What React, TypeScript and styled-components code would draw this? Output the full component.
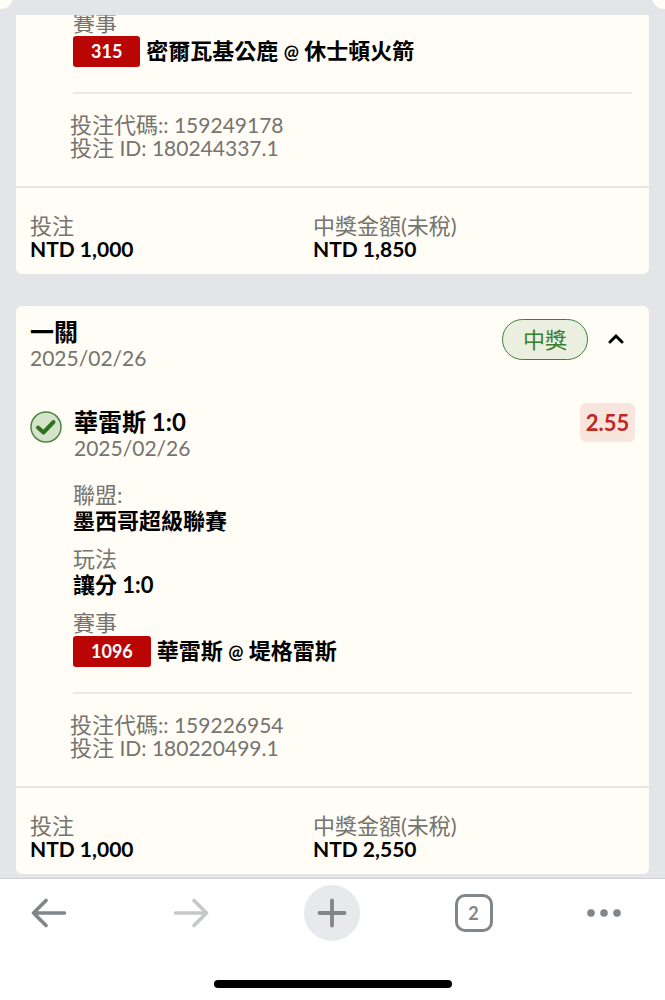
import React from "react";
import styled, { createGlobalStyle } from "styled-components";

const Global = createGlobalStyle`
  *, *::before, *::after { box-sizing: border-box; }
  html, body { margin: 0; background: #e4e5e8; }
  body, button {
    font-family: "Lato", "Noto Sans CJK TC", sans-serif;
    font-size: 22px;
    color: #000;
  }
  h2, h3, p, dl, dd, dt { margin: 0; font: inherit; }
`;

const Screen = styled.div`
  display: flex;
  flex-direction: column;
  height: 100vh;
  background: #e4e5e8;
`;

const SheetTop = styled.header`
  position: relative;
  flex: none;
  height: 15px;
  overflow: hidden;
`;

const Corner = styled.span<{ $side: "left" | "right" }>`
  position: absolute;
  top: -16px;
  ${(p) => p.$side}: -13px;
  width: 26px;
  height: 25px;
  border-radius: 12px;
  background: #fffdf5;
`;

const BetList = styled.main`
  flex: 1;
  min-height: 0;
  overflow: hidden;
  padding: 0 16px;
  display: flex;
  flex-direction: column;
  gap: 32px;
`;

const Card = styled.article<{ $scrolled?: boolean }>`
  flex: none;
  overflow: hidden;
  background: #fffdf5;
  border-radius: ${(p) => (p.$scrolled ? "0 0 6px 6px" : "6px")};
`;

const CardHead = styled.header`
  display: flex;
  align-items: flex-start;
  padding: 13px 14px 0;
`;

const Titles = styled.div`
  flex: 1;
`;

const Title = styled.h2`
  font-size: 24px;
  line-height: 26px;
  font-weight: 700;
`;

const DateText = styled.p`
  font-size: 21px;
  line-height: 26px;
  color: #757470;
`;

const Pill = styled.span`
  width: 86px;
  height: 41px;
  border: 1px solid #3f7f38;
  border-radius: 21px;
  background: #ebefe0;
  color: #3a7d2c;
  line-height: 40px;
  text-align: center;
`;

const Toggle = styled.button`
  display: flex;
  align-items: center;
  justify-content: center;
  width: 30px;
  height: 40px;
  margin-left: 13px;
  margin-right: 4px;
  padding: 0;
  border: 0;
  background: none;
`;

const Selection = styled.section`
  display: flex;
  align-items: flex-start;
  padding: 32px 14px 0;

  ${Titles} {
    padding-top: 6px;
  }
`;

const CheckIcon = styled.svg`
  flex: none;
  margin-top: 8px;
  margin-right: 12px;
`;

const Odds = styled.span`
  width: 55px;
  height: 39px;
  border-radius: 6px;
  background: #f8e5de;
  color: #c2261f;
  font-weight: 700;
  line-height: 39px;
  text-align: center;
`;

const Details = styled.dl<{ $scrolled?: boolean }>`
  display: flex;
  flex-direction: column;
  gap: 12px;
  margin: 0 17px 0 57px;
  padding: ${(p) => (p.$scrolled ? "0" : "21px")} 0 25px;
  ${(p) => p.$scrolled && "margin-top: -5px;"}
  border-bottom: 2px solid #ebe9e3;
`;

const Term = styled.dt`
  line-height: 26px;
  color: #757470;
`;

const Value = styled.dd`
  display: flex;
  align-items: center;
  gap: 6px;
  line-height: 26px;
  font-weight: 700;
`;

const GameCode = styled.span`
  padding: 0 18px;
  border-radius: 3px;
  background: #b90504;
  color: #fff;
  font-size: 18px;
  line-height: 31px;
`;

const At = styled.span`
  font-size: 18px;
`;

const Codes = styled.div`
  padding: 19px 14px 27px 54px;
  line-height: 23px;
  color: #757470;
`;

const Latin = styled.span`
  font-size: 21px;
`;

const Amounts = styled.dl`
  display: grid;
  grid-template-columns: 283px 1fr;
  padding: 26px 14px 14px;
  border-top: 2px solid #e6e6e2;
  line-height: 23px;
`;

const AmountLabel = styled.dt`
  color: #757470;
`;

const Amount = styled.dd`
  font-size: 21px;
  font-weight: 700;
`;

const BrowserBar = styled.footer`
  flex: none;
  height: 122px;
  border-top: 1px solid #cfd0d3;
  background: #fff;
  display: flex;
  flex-direction: column;
  justify-content: space-between;
  align-items: center;
  padding-bottom: 12px;
`;

const BarButtons = styled.nav`
  display: flex;
  justify-content: space-between;
  align-self: stretch;
  padding: 6px 44px 0 21px;
`;

const BarButton = styled.button<{ $filled?: boolean; $narrow?: boolean }>`
  display: flex;
  align-items: center;
  justify-content: center;
  width: ${(p) => (p.$narrow ? 34 : 56)}px;
  height: 56px;
  padding: 0;
  border: 0;
  border-radius: ${(p) => (p.$filled ? "50%" : "0")};
  background: ${(p) => (p.$filled ? "#e8e9ed" : "none")};
`;

const TabCount = styled.span`
  width: 38px;
  height: 38px;
  border: 3px solid #80868a;
  border-radius: 10px;
  color: #80868a;
  font-size: 18px;
  font-weight: 700;
  line-height: 32px;
  text-align: center;
`;

const HomeIndicator = styled.div`
  width: 238px;
  height: 8px;
  border-radius: 4px;
  background: #000;
`;

type Bet = {
  gameCode: string;
  away: string;
  home: string;
  betCode: string;
  betId: string;
  stake: string;
  payout: string;
};

function Match({ bet }: { bet: Bet }) {
  return (
    <div>
      <Term>賽事</Term>
      <Value>
        <GameCode>{bet.gameCode}</GameCode>
        <span>
          {bet.away} <At>@</At> {bet.home}
        </span>
      </Value>
    </div>
  );
}

function CardFoot({ bet }: { bet: Bet }) {
  return (
    <>
      <Codes>
        <p>
          投注代碼<Latin>:: {bet.betCode}</Latin>
        </p>
        <p>
          投注<Latin> ID: {bet.betId}</Latin>
        </p>
      </Codes>
      <Amounts>
        <div>
          <AmountLabel>投注</AmountLabel>
          <Amount>{bet.stake}</Amount>
        </div>
        <div>
          <AmountLabel>中獎金額(未稅)</AmountLabel>
          <Amount>{bet.payout}</Amount>
        </div>
      </Amounts>
    </>
  );
}

const bucks: Bet = {
  gameCode: "315",
  away: "密爾瓦基公鹿",
  home: "休士頓火箭",
  betCode: "159249178",
  betId: "180244337.1",
  stake: "NTD 1,000",
  payout: "NTD 1,850",
};

const juarez: Bet = {
  gameCode: "1096",
  away: "華雷斯",
  home: "堤格雷斯",
  betCode: "159226954",
  betId: "180220499.1",
  stake: "NTD 1,000",
  payout: "NTD 2,550",
};

export default function App() {
  return (
    <Screen>
      <Global />
      <SheetTop>
        <Corner $side="left" />
        <Corner $side="right" />
      </SheetTop>
      <BetList>
        <Card $scrolled>
          <Details $scrolled>
            <Match bet={bucks} />
          </Details>
          <CardFoot bet={bucks} />
        </Card>
        <Card>
          <CardHead>
            <Titles>
              <Title>一關</Title>
              <DateText>2025/02/26</DateText>
            </Titles>
            <Pill>中獎</Pill>
            <Toggle aria-label="收合">
              <svg width="16" height="12" viewBox="0 0 16 12" fill="none" stroke="#000" strokeWidth="3">
                <path d="M2 9 8 3l6 6" strokeLinecap="round" />
              </svg>
            </Toggle>
          </CardHead>
          <Selection>
            <CheckIcon width="32" height="32" viewBox="0 0 32 32" fill="none">
              <circle cx="16" cy="16" r="15" fill="#d5e3ca" stroke="#4c8545" strokeWidth="1.5" />
              <path d="M8 16.500 13.500 21.500 23.500 11" stroke="#2f7321" strokeWidth="4" strokeLinecap="round" strokeLinejoin="round" />
            </CheckIcon>
            <Titles>
              <Title as="h3">華雷斯 1:0</Title>
              <DateText>2025/02/26</DateText>
            </Titles>
            <Odds>2.55</Odds>
          </Selection>
          <Details>
            <div>
              <Term>聯盟:</Term>
              <Value>墨西哥超級聯賽</Value>
            </div>
            <div>
              <Term>玩法</Term>
              <Value>讓分 1:0</Value>
            </div>
            <Match bet={juarez} />
          </Details>
          <CardFoot bet={juarez} />
        </Card>
      </BetList>
      <BrowserBar>
        <BarButtons>
          <BarButton aria-label="上一頁">
            <svg width="36" height="30" viewBox="0 0 36 30" fill="none" stroke="#80868a" strokeWidth="3.6" strokeLinecap="round" strokeLinejoin="round">
              <path d="M33.500 15H2.500M15 2.500 2.500 15 15 27.500" />
            </svg>
          </BarButton>
          <BarButton aria-label="下一頁">
            <svg width="36" height="30" viewBox="0 0 36 30" fill="none" stroke="#c6c7c8" strokeWidth="3.6" strokeLinecap="round" strokeLinejoin="round">
              <path d="M2.500 15h31M21 2.500 33.500 15 21 27.500" />
            </svg>
          </BarButton>
          <BarButton $filled aria-label="新分頁">
            <svg width="32" height="32" viewBox="0 0 32 32" fill="none" stroke="#80868a" strokeWidth="3.8" strokeLinecap="round">
              <path d="M16 3.500v25M3.500 16h25" />
            </svg>
          </BarButton>
          <BarButton aria-label="分頁">
            <TabCount>2</TabCount>
          </BarButton>
          <BarButton $narrow aria-label="更多">
            <svg width="34" height="10" viewBox="0 0 34 10" fill="#80868a">
              <circle cx="4" cy="5" r="3.8" />
              <circle cx="17" cy="5" r="3.8" />
              <circle cx="30" cy="5" r="3.8" />
            </svg>
          </BarButton>
        </BarButtons>
        <HomeIndicator />
      </BrowserBar>
    </Screen>
  );
}
